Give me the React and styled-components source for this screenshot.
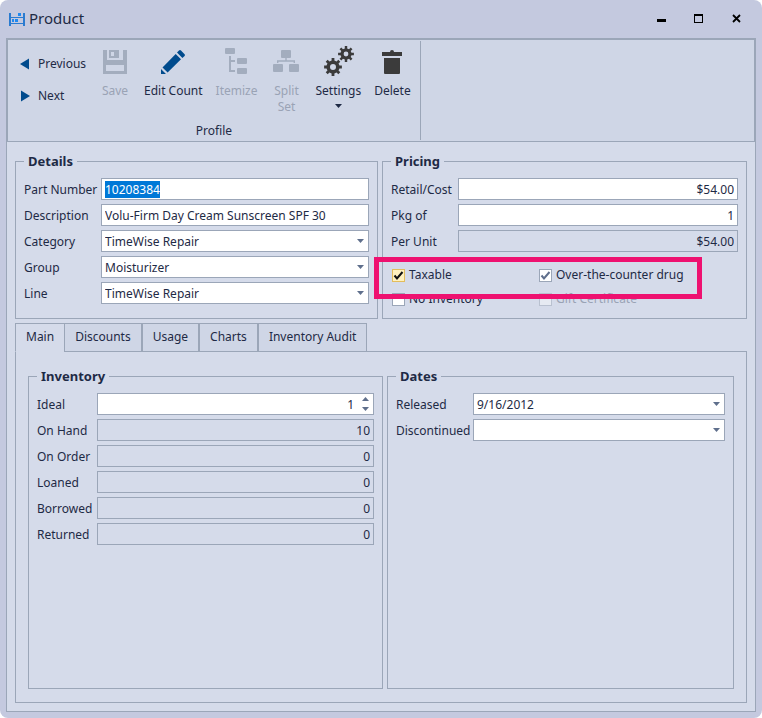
import React, { useEffect, useRef, useState } from "react";
import styled, { createGlobalStyle } from "styled-components";

const line = "#9ba6b8";
const ink = "#1e2a45";
const muted = "#9aa3b5";

// outline of a toothed wheel, drawn around cx/cy
function gearPath(cx, cy, outer, inner, hole) {
  const teeth = 8;
  const step = (Math.PI * 2) / teeth;
  const point = (r, a) =>
    `${(cx + r * Math.cos(a)).toFixed(2)} ${(cy + r * Math.sin(a)).toFixed(2)}`;
  let points = [];
  for (let i = 0; i < teeth; i++) {
    const a = i * step;
    points.push(
      point(inner, a - step * 0.27),
      point(outer, a - step * 0.2),
      point(outer, a + step * 0.2),
      point(inner, a + step * 0.27)
    );
  }
  return `M${points.join("L")}ZM${cx - hole} ${cy}a${hole} ${hole} 0 1 0 ${hole * 2} 0a${hole} ${hole} 0 1 0 ${-hole * 2} 0Z`;
}

const icons = {
  save: (
    <path
      fillRule="evenodd"
      d="M4 4H8V14H24V4H28V28H4ZM7 19V25H25V19ZM10 4H20V12H10ZM12 6V10H15V6Z"
    />
  ),
  edit: (
    <path d="M4 23L9 28H4ZM5.5 21.5L18.7 8L24 13.3L10.6 26.6ZM20 6.6L22 4.6Q23 3.6 24 4.6L27.6 8.2Q28.4 9 27.6 10L25.4 12Z" />
  ),
  itemize: (
    <>
      <rect x="4" y="2" width="10" height="6" rx="1" />
      <rect x="16" y="12" width="10" height="6" rx="1" />
      <rect x="16" y="22" width="10" height="6" rx="1" />
      <path d="M8 10H10V14H14V16H10V24H14V26H8Z" />
    </>
  ),
  split: (
    <>
      <rect x="10" y="4" width="10" height="8" rx="1" />
      <rect x="2" y="18" width="10" height="8" rx="1" />
      <rect x="18" y="18" width="10" height="8" rx="1" />
      <path d="M14.3 12H15.7V14.3H24V17H22.6V15.7H7.4V17H6V14.3H14.3Z" />
    </>
  ),
  settings: (
    <path
      fillRule="evenodd"
      d={gearPath(11, 21, 9, 6.6, 3) + gearPath(24, 8, 8, 5.6, 2.4)}
    />
  ),
  delete: (
    <path d="M6 6H14Q14 4 16 4Q18 4 18 6H26V10H6ZM8 12H24V27Q24 28 23 28H9Q8 28 8 27Z" />
  ),
};

const tools = [
  { icon: "save", label: "Save", disabled: true },
  { icon: "edit", label: "Edit Count", color: "#004b8d" },
  { icon: "itemize", label: "Itemize", disabled: true },
  { icon: "split", label: "Split Set", disabled: true, wrap: true },
  { icon: "settings", label: "Settings", menu: true },
  { icon: "delete", label: "Delete" },
];

const tabs = ["Main", "Discounts", "Usage", "Charts", "Inventory Audit"];

const stock = [
  ["On Hand", "10"],
  ["On Order", "0"],
  ["Loaned", "0"],
  ["Borrowed", "0"],
  ["Returned", "0"],
];

function Caret({ up }) {
  return (
    <svg width="7" height="4" viewBox="0 0 7 4" aria-hidden="true">
      <path d={up ? "M0 4L3.5 0L7 4Z" : "M0 0H7L3.5 4Z"} fill="currentColor" />
    </svg>
  );
}

function TextField({ id, label, value, right, readOnly, inputRef }) {
  return (
    <>
      <Label htmlFor={id}>{label}</Label>
      <Input
        id={id}
        ref={inputRef}
        defaultValue={value}
        readOnly={readOnly}
        $right={right}
      />
    </>
  );
}

function SelectField({ id, label, value }) {
  return (
    <>
      <Label htmlFor={id}>{label}</Label>
      <Control>
        <Select id={id} defaultValue={value}>
          <option>{value}</option>
        </Select>
        <DropArrow>
          <Caret />
        </DropArrow>
      </Control>
    </>
  );
}

function CheckField({ label, checked, disabled, hot }) {
  const [on, setOn] = useState(!!checked);
  return (
    <CheckLabel $disabled={disabled}>
      <CheckBox $hot={hot}>
        <input
          type="checkbox"
          checked={on}
          disabled={disabled}
          onChange={(e) => setOn(e.target.checked)}
        />
        {on && (
          <svg width="13" height="13" viewBox="0 0 13 13" aria-hidden="true">
            <path d="M2.5 6.5L5 9.5L10.5 3" />
          </svg>
        )}
      </CheckBox>
      {label}
    </CheckLabel>
  );
}

function App() {
  const partNumber = useRef(null);
  const [tab, setTab] = useState("Main");
  const [ideal, setIdeal] = useState(1);

  useEffect(() => {
    partNumber.current.focus();
    partNumber.current.select();
  }, []);

  return (
    <>
      <GlobalStyle />
      <Window>
        <TitleBar>
          <svg width="16" height="14" viewBox="0 0 16 14" aria-hidden="true">
            <path
              d="M0 1H2V5H14V1H16V14H14V12H2V14H0ZM2 6V11H14V6Z"
              fill="#2a7bd0"
              fillRule="evenodd"
            />
            <path d="M9 1H12V4H9ZM3 7H5V10H3ZM6 7H9V10H6Z" fill="#1e88f0" />
          </svg>
          <Title>Product</Title>
          <WindowButton aria-label="Minimize">
            <svg width="10" height="10" viewBox="0 0 10 10">
              <path d="M1 5H10V8H1Z" />
            </svg>
          </WindowButton>
          <WindowButton aria-label="Maximize">
            <svg width="10" height="10" viewBox="0 0 10 10">
              <path fillRule="evenodd" d="M0 0H9V9H0ZM1 2V8H8V2Z" />
            </svg>
          </WindowButton>
          <WindowButton aria-label="Close">
            <svg width="10" height="10" viewBox="0 0 10 10">
              <path
                d="M1 1L8 8M8 1L1 8"
                stroke="#000"
                strokeWidth="1.8"
                fill="none"
              />
            </svg>
          </WindowButton>
        </TitleBar>

        <Ribbon>
          <RibbonGroup>
            <Tools>
              <Pager>
                <PagerButton>
                  <svg width="10" height="12" viewBox="0 0 10 12">
                    <path d="M0 6L9 0.5V11.5Z" />
                  </svg>
                  Previous
                </PagerButton>
                <PagerButton>
                  <svg width="10" height="12" viewBox="0 0 10 12">
                    <path d="M1 0.5L10 6L1 11.5Z" />
                  </svg>
                  Next
                </PagerButton>
              </Pager>
              {tools.map((tool) => (
                <ToolButton
                  key={tool.label}
                  disabled={tool.disabled}
                  $color={tool.color}
                  $wrap={tool.wrap}
                >
                  <svg width="32" height="32" viewBox="0 0 32 32">
                    {icons[tool.icon]}
                  </svg>
                  <span>{tool.label}</span>
                  {tool.menu && (
                    <MenuMark>
                      <Caret />
                    </MenuMark>
                  )}
                </ToolButton>
              ))}
            </Tools>
            <GroupName>Profile</GroupName>
          </RibbonGroup>
        </Ribbon>

        <Content>
          <Columns $cols="363fr 365fr">
            <Group>
              <legend>Details</legend>
              <Fields $label="77px">
                <TextField
                  id="part"
                  label="Part Number"
                  value="10208384"
                  inputRef={partNumber}
                />
                <TextField
                  id="description"
                  label="Description"
                  value="Volu-Firm Day Cream Sunscreen SPF 30"
                />
                <SelectField
                  id="category"
                  label="Category"
                  value="TimeWise Repair"
                />
                <SelectField id="group" label="Group" value="Moisturizer" />
                <SelectField id="line" label="Line" value="TimeWise Repair" />
              </Fields>
            </Group>
            <Group>
              <legend>Pricing</legend>
              <Fields $label="67px">
                <TextField id="retail" label="Retail/Cost" value="$54.00" right />
                <TextField id="pkg" label="Pkg of" value="1" right />
                <TextField
                  id="unit"
                  label="Per Unit"
                  value="$54.00"
                  right
                  readOnly
                />
              </Fields>
              <Checks>
                <CheckField label="Taxable" checked hot />
                <CheckField label="Over-the-counter drug" checked />
                <CheckField label="No Inventory" />
                <CheckField label="Gift Certificate" disabled />
                <Highlight />
              </Checks>
            </Group>
          </Columns>

          <Tabs role="tablist">
            {tabs.map((name) => (
              <Tab
                key={name}
                role="tab"
                aria-selected={tab === name}
                $active={tab === name}
                onClick={() => setTab(name)}
              >
                {name}
              </Tab>
            ))}
          </Tabs>
          <TabPanel role="tabpanel">
            <Columns $cols="355fr 347fr" $grow>
              <Group>
                <legend>Inventory</legend>
                <Fields $label="60px">
                  <Label htmlFor="ideal">Ideal</Label>
                  <Control>
                    <SpinInput
                      id="ideal"
                      type="number"
                      value={ideal}
                      onChange={(e) => setIdeal(Number(e.target.value))}
                      $right
                    />
                    <Spinner>
                      <button
                        aria-label="Increase"
                        onClick={() => setIdeal(ideal + 1)}
                      >
                        <Caret up />
                      </button>
                      <button
                        aria-label="Decrease"
                        onClick={() => setIdeal(ideal - 1)}
                      >
                        <Caret />
                      </button>
                    </Spinner>
                  </Control>
                  {stock.map(([label, value]) => (
                    <TextField
                      key={label}
                      id={label.toLowerCase().replace(" ", "-")}
                      label={label}
                      value={value}
                      right
                      readOnly
                    />
                  ))}
                </Fields>
              </Group>
              <Group>
                <legend>Dates</legend>
                <Fields $label="77px">
                  <SelectField id="released" label="Released" value="9/16/2012" />
                  <SelectField id="discontinued" label="Discontinued" value="" />
                </Fields>
              </Group>
            </Columns>
          </TabPanel>
        </Content>
      </Window>
    </>
  );
}

export default App;

const GlobalStyle = createGlobalStyle`
  * {
    box-sizing: border-box;
  }

  body {
    margin: 0;
    background: #fff;
  }

  body, button, input, select {
    font-family: Tahoma, "Noto Sans", sans-serif;
    font-size: 12px;
    line-height: 16px;
    color: ${ink};
  }

  button {
    background: none;
    border: 0;
    padding: 0;
  }

  ::selection {
    background: #0078d7;
    color: #fff;
  }
`;

const Window = styled.main`
  min-height: 100vh;
  padding: 0 6px 6px;
  display: flex;
  flex-direction: column;
  background: #c4c9df;
  border-radius: 8px;
`;

const TitleBar = styled.header`
  height: 38px;
  padding-left: 3px;
  display: flex;
  align-items: center;
`;

const Title = styled.h1`
  flex: 1;
  margin: 0 0 0 4px;
  padding-bottom: 2px;
  font-size: 15px;
  line-height: 20px;
  font-weight: normal;
`;

const WindowButton = styled.button`
  width: 38px;
  height: 28px;
  display: flex;
  align-items: center;
  justify-content: center;
`;

const Ribbon = styled.nav`
  display: flex;
  background: #cfd6e6;
  border: 2px solid ${line};
  border-bottom-width: 1px;
`;

const RibbonGroup = styled.div`
  margin: 1px 0;
  padding-top: 5px;
  border-right: 1px solid ${line};
`;

const Tools = styled.div`
  display: flex;
  align-items: flex-start;
  gap: 1px;
  padding: 0 3px 0 10px;
`;

const Pager = styled.div`
  width: 74px;
  padding-top: 10px;
  display: flex;
  flex-direction: column;
  gap: 16px;
`;

const PagerButton = styled.button`
  display: flex;
  align-items: center;
  gap: 8px;
  padding-left: 2px;

  svg {
    flex: none;
    fill: #004b8d;
  }
`;

const ToolButton = styled.button`
  min-width: 42px;
  width: ${(props) => (props.$wrap ? "44px" : "auto")};
  padding: 0 6px;
  display: flex;
  flex-direction: column;
  align-items: center;
  color: ${ink};

  svg {
    flex: none;
    fill: ${(props) => props.$color || "#3b3b3b"};
  }

  span {
    margin-top: 5px;
  }

  &:disabled {
    color: ${muted};

    svg {
      fill: #a3adbe;
    }
  }
`;

const MenuMark = styled.i`
  height: 14px;
  display: flex;
  align-items: center;
`;

const GroupName = styled.div`
  padding: 8px 0 1px;
  text-align: center;
`;

const Content = styled.section`
  flex: 1;
  padding: 11px 8px 8px;
  display: flex;
  flex-direction: column;
  background: #d5dbea;
  border: 1px solid ${line};
  border-top: 0;
`;

const Columns = styled.div`
  display: grid;
  grid-template-columns: ${(props) => props.$cols};
  gap: 4px;
  flex: ${(props) => (props.$grow ? 1 : "none")};
`;

const Group = styled.fieldset`
  min-width: 0;
  margin: 0;
  padding: 9px 8px 11px;
  border: 1px solid ${line};

  legend {
    padding: 0 4px;
    font-weight: bold;
    font-size: 13px;
  }
`;

const Fields = styled.div`
  display: grid;
  grid-template-columns: ${(props) => props.$label} minmax(0, 1fr);
  row-gap: 4px;
`;

const Label = styled.label`
  padding-top: 2px;
  line-height: 20px;
  white-space: nowrap;
`;

const Input = styled.input`
  width: 100%;
  height: 22px;
  margin: 0;
  padding: 0 3px;
  border: 1px solid ${line};
  border-radius: 0;
  background: #fff;
  outline: 0;
  text-align: ${(props) => (props.$right ? "right" : "left")};

  &:read-only {
    background: #d5dbea;
  }
`;

const Control = styled.div`
  position: relative;
  height: 22px;
`;

const SpinInput = styled(Input)`
  appearance: textfield;
  padding-right: 19px;

  &::-webkit-inner-spin-button {
    display: none;
  }
`;

const Spinner = styled.div`
  position: absolute;
  inset: 1px 1px 1px auto;
  width: 15px;
  display: flex;
  flex-direction: column;

  button {
    flex: 1;
    display: flex;
    align-items: center;
    justify-content: center;
    color: #5f6f8c;
  }
`;

const Select = styled.select`
  appearance: none;
  width: 100%;
  height: 22px;
  margin: 0;
  padding: 1px 18px 0 3px;
  border: 1px solid ${line};
  border-radius: 0;
  background: #fff;
  outline: 0;
`;

const DropArrow = styled.span`
  position: absolute;
  inset: 0 5px 0 auto;
  display: flex;
  align-items: center;
  pointer-events: none;
  color: #5f6f8c;
`;

const Checks = styled.div`
  position: relative;
  margin-top: 15px;
  padding-left: 1px;
  display: grid;
  grid-template-columns: 147px 1fr;
  row-gap: 8px;
`;

const CheckLabel = styled.label`
  display: flex;
  align-items: center;
  gap: 4px;
  color: ${(props) => (props.$disabled ? muted : ink)};
`;

const CheckBox = styled.span`
  display: grid;

  input {
    grid-area: 1 / 1;
    appearance: none;
    width: 13px;
    height: 13px;
    margin: 0;
    border: 1px solid ${(props) => (props.$hot ? "#e3bd5c" : line)};
    background: ${(props) => (props.$hot ? "#fff1bf" : "#fff")};
  }

  input:disabled {
    border-color: #b9c1d0;
    background: #e6eaf2;
  }

  svg {
    grid-area: 1 / 1;
    pointer-events: none;
    fill: none;
    stroke: ${(props) => (props.$hot ? "#111" : "#5f6f8c")};
    stroke-width: 2;
  }
`;

const Highlight = styled.div`
  position: absolute;
  inset: -10px 36px 8px -17px;
  border: 5px solid #ee1170;
  pointer-events: none;
`;

const Tabs = styled.div`
  display: flex;
  margin-top: 4px;
`;

const Tab = styled.button`
  height: 29px;
  margin-bottom: -1px;
  padding: 0 10px 2px;
  border: 1px solid ${line};
  border-right-width: ${(props) => (props.$active ? 0 : "1px")};
  border-bottom-color: ${(props) => (props.$active ? "#d5dbea" : line)};
  background: ${(props) => (props.$active ? "#d5dbea" : "#cfd6e6")};
  position: relative;
`;

const TabPanel = styled.div`
  flex: 1;
  padding: 16px 12px 13px;
  display: flex;
  flex-direction: column;
  border: 1px solid ${line};
`;
